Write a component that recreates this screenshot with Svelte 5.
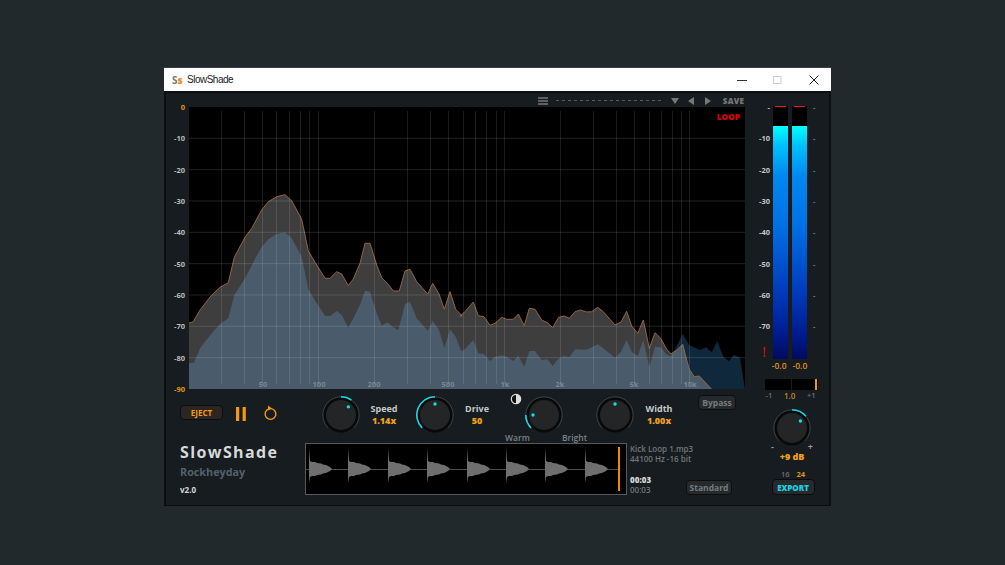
<script>
  // spectrum traces, read off the plot as page coordinates
  const toChart = (pts) => pts.map(([x, y]) => [+(x - 189).toFixed(1), +(y - 107).toFixed(1)]);
  const a = (pts) => pts.map(([x, y]) => [185 + x / 3, 180 + y / 3]);
  const b = (pts) => pts.map(([x, y]) => [460 + x / 3, 260 + y / 3]);

  const upper = toChart([
    [189, 323],
    ...a([[10,430],[25,425],[45,390],[80,345],[105,322],[130,308],[148,232],[180,172],[200,145],[230,90],[250,65],[275,50],[300,44],[320,62],[350,118],[370,213],[395,255],[420,295],[435,295],[455,275],[470,282],[490,317],[505,297],[525,250],[540,190],[555,190],[575,255],[590,293],[610,313],[625,333],[643,333],[660,273],[675,268],[695,305],[728,342],[743,310],[762,342],[778,388],[795,335],[812,388],[832,408]]),
    ...b([[0,168],[15,155],[40,126],[55,167],[72,170],[90,196],[105,190],[125,172],[140,178],[160,178],[175,162],[193,197],[208,145],[225,148],[245,180],[262,188],[278,203],[295,173],[312,168],[328,175],[345,155],[362,150],[380,156],[395,155],[413,142],[430,155],[465,195],[483,186],[500,154],[515,198],[533,220],[550,180],[568,265],[585,218],[602,235],[620,268],[633,282],[650,270],[668,253],[680,300],[688,328],[703,350],[718,348],[755,388]])
  ]);

  const lower = toChart([
    [189, 363],
    ...a([[10,550],[27,548],[45,505],[80,460],[105,432],[130,415],[148,345],[180,295],[198,260],[230,200],[250,178],[275,162],[300,157],[320,175],[350,230],[370,328],[395,370],[420,407],[435,408],[455,393],[470,405],[490,443],[505,415],[525,375],[540,332],[555,335],[575,400],[590,437],[607,427],[625,442],[640,450],[660,373],[675,365],[695,415],[728,452],[743,423],[762,450],[778,505],[795,448],[812,470],[830,517]]),
    ...b([[0,275],[15,268],[40,240],[55,280],[72,283],[90,303],[105,290],[125,286],[140,290],[160,303],[175,287],[193,320],[208,273],[225,273],[245,300],[262,298],[278,318],[295,296],[312,288],[328,292],[345,268],[380,269],[395,262],[413,253],[430,265],[465,293],[483,275],[500,240],[515,275],[533,288],[550,240],[568,322],[585,260],[602,262],[620,285],[633,288],[645,268],[668,222],[688,255],[720,270],[738,262],[755,277],[772,243],[790,290],[807,303],[822,285],[840,293],[855,388]])
  ]);

  const line = (pts) => pts.map(([x, y]) => `${x},${y}`).join(' ');
  const area = (pts) => `0,282 ${line(pts)} ${pts[pts.length - 1][0]},282`;

  const dbLabels = ['0', '-10', '-20', '-30', '-40', '-50', '-60', '-70', '-80', '-90'];
  const meterLabels = ['-', '-10', '-20', '-30', '-40', '-50', '-60', '-70'];
  const gridY = [1, 2, 3, 4, 5, 6, 7, 8].map((i) => i * 31.33);
  const gridX = [221, 244, 262, 276, 289, 300, 309, 318, 374, 407, 430, 448, 463, 475, 486, 496, 504, 560, 593, 616, 634, 649, 661, 672, 681, 689].map((x) => x - 189);
  const freqs = [['50', 263], ['100', 319], ['200', 374], ['500', 448], ['1k', 505], ['2k', 560], ['5k', 634], ['10k', 690]];

  const hits = [3, 42, 82, 121, 161, 200, 239, 279];
  const wavePath = (x) =>
    `M${x} 25 V3 L${x + 1} 17 L${x + 3} 18 L${x + 6} 18 L${x + 8} 19 L${x + 12} 19.5 L${x + 14} 20.5 L${x + 17} 21 L${x + 19} 22 L${x + 21} 23 L${x + 23} 25 L${x + 21} 27 L${x + 19} 28 L${x + 17} 29 L${x + 14} 29.5 L${x + 12} 30.5 L${x + 8} 31 L${x + 6} 32 L${x + 3} 32 L${x + 1} 33 L${x} 39 Z`;

  function polar(deg, r) {
    const t = ((deg - 90) * Math.PI) / 180;
    return [+(19 + r * Math.cos(t)).toFixed(2), +(19 + r * Math.sin(t)).toFixed(2)];
  }
  function arc(from, to, r) {
    const [x1, y1] = polar(from, r);
    const [x2, y2] = polar(to, r);
    return `M${x1} ${y1} A${r} ${r} 0 ${to - from > 180 ? 1 : 0} 1 ${x2} ${y2}`;
  }
</script>

{#snippet knob(from, to, dot)}
  <svg class="knob" width="38" height="38" viewBox="0 0 38 38">
    <circle cx="19" cy="19" r="17.5" fill="#08090a" />
    <path d={arc(-135, 135, 18.2)} fill="none" stroke="#3c4144" stroke-width="1" />
    {#if from !== to}
      <path d={arc(from, to, 18.2)} fill="none" stroke="#14d6e6" stroke-width="1.6" />
    {/if}
    <circle cx="19" cy="19" r="15" fill="#232526" />
    <circle cx={polar(dot, 11)[0]} cy={polar(dot, 11)[1]} r="1.7" fill="#16dcea" />
  </svg>
{/snippet}

<div class="page">
  <div class="window">
    <header class="titlebar">
      <span class="logo">S<b>s</b></span>
      <span class="title">SlowShade</span>
      <div class="winbtns">
        <svg width="10" height="10" viewBox="0 0 10 10"><path d="M0 5.5H10" stroke="#333" stroke-width="1" /></svg>
        <svg width="10" height="10" viewBox="0 0 10 10"><rect x="0.5" y="1.5" width="7.5" height="7" fill="none" stroke="#ccc" /></svg>
        <svg width="10" height="10" viewBox="0 0 10 10"><path d="M0.5 0.5L9.5 9.5M9.5 0.5L0.5 9.5" stroke="#222" stroke-width="1" /></svg>
      </div>
    </header>

    <div class="plugin">
      <div class="left">
        <div class="toolbar">
          <svg width="10" height="8" viewBox="0 0 10 8"><path d="M0 1H10M0 4H10M0 7H10" stroke="#777" stroke-width="1.3" /></svg>
          <span class="dashes"></span>
          <span class="tri down"></span>
          <span class="tri left-t"></span>
          <span class="tri right-t"></span>
          <span class="save">SAVE</span>
        </div>

        <div class="spectrum-row">
          <div class="db-axis">
            {#each dbLabels as d, i}
              <span class:hot={i === 0 || i === 9}>{d}</span>
            {/each}
          </div>
          <div class="chart">
            <svg width="556" height="282" viewBox="0 0 556 282">
              <polygon points={area(lower)} fill="#10283c" />
              <polygon points={area(upper)} fill="#fff" fill-opacity="0.245" />
              <polyline points={line(upper)} fill="none" stroke="#96633f" stroke-width="1" />
              {#each gridY as y}
                <line x1="0" x2="556" y1={y} y2={y} stroke="#fff" stroke-opacity="0.13" />
              {/each}
              {#each gridX as x}
                <line x1={x + 0.5} x2={x + 0.5} y1="4" y2="277" stroke="#fff" stroke-opacity="0.11" />
              {/each}
              {#each freqs as [label, x]}
                <text x={x - 189} y="280" text-anchor="middle" class="freq">{label}</text>
              {/each}
            </svg>
            <span class="loop">LOOP</span>
          </div>
        </div>

        <div class="controls">
          <div class="transport">
            <button class="eject">EJECT</button>
            <svg class="pause" width="10" height="14" viewBox="0 0 10 14"><path d="M0 0h3.2v14H0zM6.6 0h3.2v14H6.6z" fill="#f59a12" /></svg>
            <svg class="again" width="15" height="17" viewBox="0 0 15 17">
              <circle cx="7.5" cy="10" r="5.4" fill="none" stroke="#f59a12" stroke-width="1.4" />
              <path d="M5 1.5L9 4.5L5 6.5Z" fill="#f59a12" />
            </svg>
          </div>

          <div class="group">
            {@render knob(0, 35, 42)}
            <div class="readout w-speed"><span>Speed</span><strong>1.14x</strong></div>
          </div>
          <div class="group">
            {@render knob(-135, 0, 0)}
            <div class="readout w-drive"><span>Drive</span><strong>50</strong></div>
          </div>
          <div class="group tone">
            <svg class="contrast" width="12" height="12" viewBox="0 0 12 12">
              <circle cx="6" cy="6" r="4.7" fill="#111" stroke="#ddd" stroke-width="1.2" />
              <path d="M6 1.3A4.7 4.7 0 0 1 6 10.7Z" fill="#ddd" />
            </svg>
            {@render knob(-135, -90, -90)}
            <div class="tone-labels"><span>Warm</span><span>Bright</span></div>
          </div>
          <div class="group">
            {@render knob(0, 0, 0)}
            <div class="readout w-width"><span>Width</span><strong>1.00x</strong></div>
          </div>
          <button class="ghost bypass">Bypass</button>
        </div>

        <div class="lower">
          <div class="identity">
            <h1>SlowShade</h1>
            <h2>Rockheyday</h2>
            <small>v2.0</small>
          </div>
          <div class="wave">
            <svg width="320" height="50" viewBox="0 0 320 50">
              <path d="M0 25.5H312" stroke="#4c4c4c" stroke-width="1" />
              {#each hits as x}
                <path d={wavePath(x)} fill="#6f6f6f" />
              {/each}
              <rect x="312" y="3" width="2" height="44" fill="#f08a00" />
            </svg>
          </div>
          <div class="fileinfo">
            <div class="meta">Kick Loop 1.mp3<br />44100 Hz -16 bit</div>
            <div class="foot">
              <div class="times"><b>00:03</b><br />00:03</div>
              <button class="ghost standard">Standard</button>
            </div>
          </div>
        </div>
      </div>

      <aside class="right">
        <div class="meters">
          <div class="scale">
            {#each meterLabels as m}
              <span>{m}</span>
            {/each}
            <em class="clip">!</em>
          </div>
          <div class="bar"><i class="peak"></i><div class="fill"></div></div>
          <div class="bar"><i class="peak"></i><div class="fill"></div></div>
          <div class="ticks">
            {#each meterLabels as _}
              <span>-</span>
            {/each}
          </div>
        </div>
        <div class="levels"><span>-0.0</span><span>-0.0</span></div>
        <div class="balance">
          <div></div>
          <div><i></i></div>
        </div>
        <div class="balance-labels"><span>-1</span><b>1.0</b><span>+1</span></div>
        <div class="output">
          {@render knob(0, 50, 50)}
          <div class="pm"><span>-</span><span>+</span></div>
          <strong>+9 dB</strong>
        </div>
        <div class="depth"><span>16</span><b>24</b></div>
        <button class="export">EXPORT</button>
      </aside>
    </div>
  </div>
</div>

<style>
  :global(body) {
    background: #22292d;
    font-family: "Open Sans", "Noto Sans", sans-serif;
  }
  .page {
    width: 1005px;
    height: 565px;
    padding: 67px 0 0 164px;
    box-sizing: border-box;
    background: #22292d;
    overflow: hidden;
  }
  .window {
    width: 667px;
    background: #0d1012;
    border-top: 1px solid #3a3f42;
  }
  button {
    font-family: inherit;
    cursor: pointer;
    padding: 0;
  }

  .titlebar {
    height: 23px;
    background: #fff;
    display: flex;
    align-items: center;
    padding-left: 8px;
    color: #222;
  }
  .logo {
    font-size: 10px;
    font-weight: 700;
    color: #777;
    width: 15px;
  }
  .logo b {
    color: #ee8a1e;
  }
  .title {
    font-family: "Liberation Sans", sans-serif;
    font-size: 10px;
    letter-spacing: -0.5px;
  }
  .winbtns {
    margin-left: auto;
    display: flex;
    gap: 26px;
    padding-right: 12px;
  }

  .plugin {
    display: flex;
    margin: 2px 1px 1px;
    height: 412px;
    background: #161c20;
    border: 1px solid #0a0c0e;
    border-top: 0;
  }
  .left {
    width: 581px;
    flex: none;
  }

  .toolbar {
    height: 14px;
    display: flex;
    align-items: center;
    justify-content: flex-end;
    padding-right: 3px;
    padding-top: 1px;
    box-sizing: border-box;
  }
  .dashes {
    width: 105px;
    height: 1px;
    margin: 0 10px 0 8px;
    background: repeating-linear-gradient(90deg, #5a5a5a 0 3px, transparent 3px 6px);
  }
  .tri {
    width: 0;
    height: 0;
    border-style: solid;
    border-color: transparent;
  }
  .down {
    border-width: 6px 4px 0;
    border-top-color: #777;
    margin-right: 9px;
  }
  .left-t {
    border-width: 4px 6px 4px 0;
    border-right-color: #777;
    margin-right: 11px;
  }
  .right-t {
    border-width: 4px 0 4px 6px;
    border-left-color: #777;
    margin-right: 12px;
  }
  .save {
    font-size: 8px;
    font-weight: 800;
    color: #777;
    letter-spacing: 0.2px;
  }

  .spectrum-row {
    display: flex;
    height: 282px;
  }
  .db-axis {
    width: 23px;
    height: 282px;
    display: flex;
    flex-direction: column;
    color: #bbb;
    font-size: 7.5px;
    font-weight: 700;
    text-align: right;
  }
  .db-axis span {
    flex: none;
    height: 31.33px;
    line-height: 0;
    padding-right: 4px;
  }
  .db-axis .hot {
    color: #e8960f;
  }
  .chart {
    position: relative;
    width: 556px;
    height: 282px;
    background: #000;
  }
  .chart svg {
    display: block;
  }
  .freq {
    font-size: 7.5px;
    font-weight: 700;
    fill: #fff;
    fill-opacity: 0.28;
  }
  .loop {
    position: absolute;
    right: 5px;
    top: 4px;
    color: #e0000c;
    font-size: 8px;
    font-weight: 800;
    letter-spacing: 0.2px;
  }

  .controls {
    display: grid;
    grid-template-columns: 156px 94px 89px 91px 102px 38px;
    height: 54px;
    padding-top: 7px;
    box-sizing: border-box;
  }
  .transport {
    display: flex;
    align-items: flex-start;
    padding: 9px 0 0 14px;
  }
  .eject {
    width: 43px;
    height: 15px;
    border-radius: 4px;
    border: 1px solid #0b0d0e;
    background: #2b2622;
    color: #f29a14;
    font-size: 8px;
    font-weight: 700;
  }
  .pause {
    margin: 2px 0 0 13px;
  }
  .again {
    margin: -1px 0 0 17px;
  }
  .group {
    display: flex;
    align-items: flex-start;
  }
  .readout {
    display: flex;
    flex-direction: column;
    align-items: center;
    padding-top: 7px;
    font-size: 9px;
    font-weight: 700;
    line-height: 12px;
    color: #c4c8ca;
  }
  .readout strong {
    color: #f0a015;
  }
  .w-speed {
    width: 48px;
  }
  .w-drive {
    width: 46px;
  }
  .w-width {
    width: 50px;
  }
  .tone {
    position: relative;
    flex-direction: column;
    padding-left: 20px;
  }
  .contrast {
    position: absolute;
    left: 5px;
    top: -3px;
  }
  .tone-labels {
    display: flex;
    justify-content: space-between;
    width: 82px;
    margin: -2px 0 0 -20px;
    color: #7c8184;
    font-size: 8.5px;
    font-weight: 600;
  }
  .ghost {
    background: #262a2c;
    border: 1px solid #0c0e10;
    border-radius: 4px;
    color: #777c7f;
    font-size: 8.5px;
    font-weight: 700;
  }
  .bypass {
    height: 15px;
    margin-top: -1px;
  }

  .lower {
    display: flex;
    padding: 0 0 0 14px;
  }
  .identity {
    width: 125px;
    flex: none;
  }
  h1 {
    margin: 0;
    font-size: 16px;
    line-height: 19px;
    font-weight: 700;
    letter-spacing: 1.4px;
    color: #d6d8d9;
  }
  h2 {
    margin: 0;
    font-size: 10.8px;
    line-height: 19px;
    font-weight: 700;
    color: #52616d;
  }
  small {
    display: block;
    margin-top: 3px;
    font-size: 8px;
    line-height: 12px;
    font-weight: 700;
    color: #d8d8d8;
  }
  .wave {
    width: 320px;
    height: 50px;
    flex: none;
    border: 1px solid #55595c;
    background: #000;
  }
  .wave svg {
    display: block;
  }
  .fileinfo {
    width: 105px;
    flex: none;
    padding: 0 0 0 3px;
    box-sizing: border-box;
    color: #72777a;
    font-size: 8px;
    font-weight: 600;
    line-height: 10px;
  }
  .meta {
    padding-top: 1px;
  }
  .foot {
    display: flex;
    justify-content: space-between;
    margin-top: 11px;
  }
  .times b {
    color: #d5d5d5;
  }
  .standard {
    width: 46px;
    flex: none;
    height: 15px;
    margin-top: 5px;
  }

  .right {
    flex: 1;
    display: flex;
    flex-direction: column;
    align-items: center;
    padding-left: 10px;
  }
  .meters {
    display: flex;
    align-self: flex-start;
    height: 253px;
    margin: 13px 0 0 -9px;
  }
  .scale {
    position: relative;
    width: 22px;
    color: #c2c6c8;
    font-size: 7.5px;
    font-weight: 700;
    text-align: right;
  }
  .scale span {
    display: block;
    height: 31.33px;
    line-height: 2px;
  }
  .clip {
    position: absolute;
    right: 4px;
    top: 238px;
    color: #e0101a;
    font-size: 14px;
    line-height: 15px;
    font-style: normal;
    font-weight: 400;
  }
  .bar {
    position: relative;
    width: 15px;
    margin-left: 3px;
    background: #000;
    display: flex;
    flex-direction: column;
    justify-content: flex-end;
  }
  .bar + .bar {
    margin-left: 4px;
  }
  .peak {
    position: absolute;
    top: 0;
    left: 2px;
    right: 2px;
    height: 1px;
    background: #ee1c1c;
  }
  .fill {
    height: 233px;
    background: linear-gradient(#00ffff 0, #00bfff 20px, #0088f0 50px, #0070e4 100px, #0038b8 170px, #001a8c 210px, #000b5c 233px);
  }
  .ticks {
    width: 10px;
    margin-left: 6px;
    color: #777;
    font-size: 7.5px;
    font-weight: 700;
  }
  .ticks span {
    display: block;
    height: 31.33px;
    line-height: 2px;
  }
  .levels {
    display: flex;
    gap: 6px;
    margin: 1px 0 0 -7px;
    color: #e09212;
    font-size: 8.5px;
    font-weight: 600;
    line-height: 12px;
  }
  .balance {
    display: flex;
    gap: 1px;
    margin: 7px 0 0 -4px;
    height: 11px;
  }
  .balance div {
    width: 26px;
    background: #000;
    position: relative;
    display: flex;
    justify-content: flex-end;
  }
  .balance i {
    width: 2px;
    background: #f09a14;
    margin-right: 1px;
  }
  .balance-labels {
    display: flex;
    justify-content: space-between;
    width: 50px;
    margin: 0 0 0 -5px;
    font-size: 7.5px;
    line-height: 11px;
    color: #6c7174;
    font-weight: 600;
  }
  .balance-labels b {
    color: #c98a14;
    font-weight: 600;
    font-size: 8px;
  }
  .output {
    display: flex;
    flex-direction: column;
    align-items: center;
    margin: 8px 0 0 -2px;
    color: #f0a015;
    font-size: 9px;
    font-weight: 700;
    position: relative;
  }
  .pm {
    display: flex;
    justify-content: space-between;
    width: 42px;
    height: 6px;
    margin-top: -3px;
    color: #999;
    font-size: 9px;
    line-height: 6px;
  }
  .output strong {
    line-height: 13px;
    margin-top: 0;
  }
  .depth {
    display: flex;
    gap: 7px;
    margin-top: 6px;
    font-size: 7.5px;
    line-height: 11px;
    font-weight: 600;
    color: #6c7174;
  }
  .depth b {
    color: #e09212;
    font-weight: 700;
  }
  .export {
    width: 43px;
    height: 16px;
    margin-top: -1px;
    border-radius: 4px;
    border: 1px solid #0a0c0d;
    background: #262a2c;
    color: #18d3e2;
    font-size: 8px;
    font-weight: 800;
  }
</style>
